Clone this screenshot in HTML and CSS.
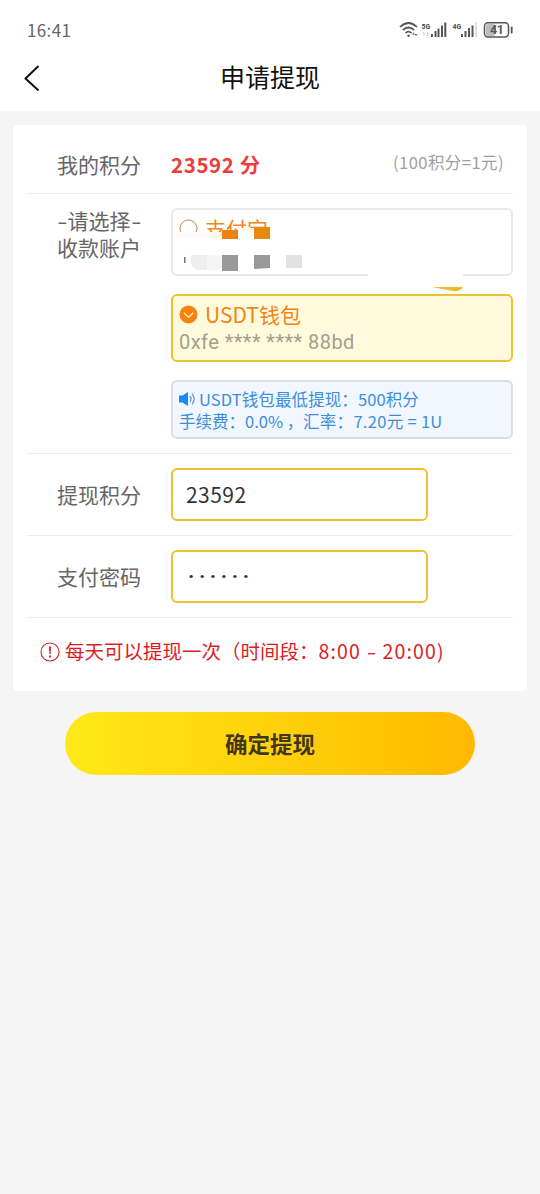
FILE: index.html
```
<!DOCTYPE html>
<html lang="zh-CN">
<head>
    <meta charset="UTF-8">
    <meta name="viewport" content="width=device-width, initial-scale=1.0">
    <title>申请提现</title>
    <link rel="stylesheet" href="styles.css">
</head>
<body>
    <header>
        <!-- 状态栏 -->
        <div class="status">
            <span class="clock">16:41</span>
            <svg class="status-icons" width="116" height="20" viewBox="0 0 116 20">
                <g fill="none" stroke="#555" stroke-width="1.7">
                    <path d="M1 7Q9.500 -1 18 7"/>
                    <path d="M3.800 10.200Q9.500 4.800 15.200 10.200"/>
                    <path d="M6.500 13.100Q9.500 10.300 12.500 13.100"/>
                </g>
                <circle cx="9.500" cy="15.700" r="1.200" fill="#555"/>
                <path d="M13 14.500l1.500-2 1.500 2zM15.500 14l1.500 2 1.500-2z" fill="#666"/>
                <text x="22.500" y="8.500" class="net">5G</text>
                <path d="M25 12v4M23.500 13.500l1.500-1.500M28.500 12v4M28.500 16l1.500-1.500" stroke="#ccc" fill="none"/>
                <g fill="#555">
                    <rect x="32" y="14" width="2" height="3"/>
                    <rect x="35.500" y="11" width="2" height="6"/>
                    <rect x="38.500" y="8.500" width="2" height="8.500"/>
                    <rect x="42" y="5.500" width="2" height="11.500"/>
                    <rect x="45.300" y="2.500" width="2" height="14.500"/>
                    <rect x="62" y="14" width="2" height="3"/>
                    <rect x="65.500" y="11" width="2" height="6"/>
                    <rect x="69" y="8" width="2" height="9"/>
                    <rect x="72.500" y="5.500" width="2" height="11.500"/>
                </g>
                <rect x="76" y="2.500" width="2" height="14.500" fill="#ddd"/>
                <text x="53.500" y="8.500" class="net">4G</text>
                <rect x="87" y="4" width="9" height="12" rx="2" fill="#bbb"/>
                <rect x="85.500" y="2.700" width="24" height="14.300" rx="3.500" fill="none" stroke="#555" stroke-width="1.500"/>
                <rect x="111.800" y="6.500" width="1.800" height="7" rx=".9" fill="#555"/>
                <text x="91" y="14.400" class="level">41</text>
            </svg>
        </div>
        <!-- 标题栏 -->
        <div class="nav">
            <svg width="20" height="30" viewBox="0 0 20 30">
                <path d="M16.500 4L3.500 16.500L16.500 28.500" fill="none" stroke="#111" stroke-width="2"/>
            </svg>
            <h1>申请提现</h1>
        </div>
    </header>

    <main class="card">
        <div class="row row-points">
            <div class="label">我的积分</div>
            <div class="points">23592 分</div>
            <div class="rate">(100积分=1元)</div>
        </div>

        <div class="row row-account">
            <div class="label label-account"><span class="dash">-</span>请选择<span class="dash">-</span><br>收款账户</div>
            <div class="accounts">
                <div class="account">
                    <div class="name">
                        <svg width="19" height="19" viewBox="0 0 19 19"><circle cx="9.500" cy="9.500" r="8.500" fill="none" stroke="#c8833c"/></svg>
                        支付宝
                    </div>
                    <svg class="mask" width="342" height="86" viewBox="0 0 342 86">
                        <path d="M4 24h110v35H4z" fill="#fff"/>
                        <path d="M4 24h36v6H4z" fill="#fffafa"/>
                        <path d="M40 24h11v7H40zM67 20h16v8H67z" fill="#fff7e2"/>
                        <path d="M51 22h16v9H51z" fill="#ed8410"/>
                        <path d="M83 19h16v12H83z" fill="#e68a0c"/>
                        <path d="M67 23h16v8H67z" fill="#f5ffff"/>
                        <path d="M13 49h1.500v6H13z" fill="#777"/>
                        <path d="M20 47h16v15h-8q-5 0-8-6z" fill="#eee"/>
                        <path d="M36 47h15v15H36z" fill="#f5f5f5"/>
                        <path d="M51 47h16v16H51zM83 47h16v13l-16 1z" fill="#999"/>
                        <path d="M115 47h16v13h-16z" fill="#e2e2e2"/>
                        <path d="M197 65h95v4h-95z" fill="#fff"/>
                        <path d="M261 79h31q-3 5-10 4z" fill="#edb92e"/>
                    </svg>
                </div>
                <div class="account active">
                    <div class="name">
                        <svg width="19" height="19" viewBox="0 0 19 19">
                            <circle cx="9.500" cy="9.500" r="9" fill="#f9820f"/>
                            <path d="M4.800 7.800l4.700 4.500 4.700-4.500" fill="none" stroke="#ffe9b8" stroke-width="1.300"/>
                        </svg>
                        USDT钱包
                    </div>
                    <div class="address">0xfe **** **** 88bd</div>
                </div>
                <div class="tip">
                    <div class="tip-line">
                        <svg width="17" height="16" viewBox="0 0 17 16">
                            <path d="M0 4.500h3.500L9 1v14l-5.500-3.500H0z" fill="#1e88f5"/>
                            <path d="M11 5.200q2.300 2.800 0 5.600M13 2.800q4.500 5.200 0 10.400" fill="none" stroke="#3a8fe8" stroke-width="1.100"/>
                        </svg>
                        <span class="tip-min">USDT钱包最低提现：500积分</span>
                    </div>
                    <div class="tip-line"><span class="tip-fee">手续费：0.0% ，</span><span class="tip-rate">汇率：7.20元 = 1U</span></div>
                </div>
            </div>
        </div>

        <div class="row row-input">
            <label class="label" for="amount">提现积分</label>
            <input type="text" id="amount" value="23592">
        </div>

        <div class="row row-input">
            <div class="label">支付密码</div>
            <div class="field">······</div>
        </div>

        <div class="notice">
            <svg width="20" height="20" viewBox="0 0 20 20">
                <circle cx="10" cy="10" r="9" fill="none" stroke="#cf2828" stroke-width="1.100"/>
                <path d="M9 4.500h2l-.4 7.500H9.400zM9 13.500h2v2H9z" fill="#d81e1e"/>
            </svg>
            <span>每天可以提现一次（时间段：</span><span class="hours">8:00 <span class="dash">-</span> 20:00)</span>
        </div>
    </main>

    <button class="submit">确定提现</button>
</body>
</html>
```
FILE: styles.css
```
* { box-sizing: border-box; }
body { margin: 0; min-height: 1194px; background: #f5f5f5; color: #333; font-family: "Noto Sans CJK SC", sans-serif; }
header { height: 111px; background: #fff; }
.status { height: 45px; padding: 20px 25px 0 27px; display: flex; justify-content: space-between; }
.clock { font-size: 17px; line-height: 19px; letter-spacing: .35px; color: #666; }
.status-icons { display: block; }
.net { font: bold 8px "Liberation Sans Narrow", "Roboto Condensed", Roboto, sans-serif; fill: #555; }
.level { font: bold 12.5px Roboto, sans-serif; fill: #555; letter-spacing: -.3px; }
.nav { height: 66px; padding: 17px 22px 0; display: grid; grid-template-columns: 20px 1fr 20px; }
h1 { margin: 0; font-size: 25px; font-weight: 400; line-height: 29px; text-align: center; color: #111; }

.card { height: 566px; margin: 14px 13px 0; padding: 0 14px; background: #fff; border-radius: 5px; }
.row { display: flex; border-bottom: 1px solid #ebebeb; padding: 14px 0 14px 30px; }
.label { width: 114px; flex: none; font-size: 21px; color: #666; }
.row-points { height: 69px; padding-top: 24px; line-height: 30px; }
.points { flex: 1; font-size: 20.5px; font-weight: bold; color: #ee3b3b; letter-spacing: .6px; }
.rate { margin-right: 9px; font-size: 16.5px; line-height: 27px; color: #a0a0a0; letter-spacing: .45px; white-space: nowrap; }
.row-account { height: 260px; padding-top: 13px; }
.label-account { line-height: 27px; }
.dash { display: inline-block; width: 10.5px; text-align: center; transform: scaleX(1.4); }

.accounts { width: 342px; flex: none; margin-top: 1px; display: flex; flex-direction: column; gap: 18px; }
.account { position: relative; height: 68px; padding: 6px 7px; border: 2px solid #e9e9e9; border-radius: 6px; }
.account.active { background: #fffadc; border-color: #edc132; }
.name { display: flex; align-items: center; gap: 7px; height: 27px; margin: -1px 0 0 -1px; font-size: 21px; line-height: 27px; color: #f18519; }
.address { margin-left: -1px; font-family: Roboto, sans-serif; font-size: 20px; line-height: 29px; color: #a49f8f; letter-spacing: .45px; }
.mask { position: absolute; left: -2px; top: -2px; }
.tip { height: 59px; padding: 6px; border: 2px solid #dadfe5; border-radius: 6px; background: #f2f7ff; font-size: 16.5px; line-height: 22px; color: #3b8fda; }
.tip-line { display: flex; align-items: center; height: 22px; white-space: nowrap; }
.tip-min { margin-left: 3px; letter-spacing: .1px; }
.tip-fee { width: 124px; }
.tip-rate { letter-spacing: .3px; }

.row-input { height: 82px; align-items: center; }
.row-input .label { margin-top: -2px; }
.row-input input, .field { width: 257px; height: 53px; padding: 0 13px 2px; border: 2px solid #edc132; border-radius: 6px; background: #fff; color: #333; font: 21px/49px "Noto Sans CJK SC", sans-serif; outline: none; }
.row-input input { letter-spacing: .45px; }
.field { padding-left: 15px; font-family: Roboto, "Noto Sans", sans-serif; font-weight: bold; letter-spacing: 4.6px; }
.notice { display: flex; align-items: center; height: 67px; padding: 0 0 2px 13px; font-size: 19.5px; color: #dc1c24; white-space: nowrap; }
.notice svg { margin-right: 5px; position: relative; top: 1px; }
.hours { letter-spacing: 1.15px; }
.submit { display: block; width: 410px; height: 63px; margin: 21px auto 0; padding: 0 0 2px; border: 0; border-radius: 32px; background: linear-gradient(90deg, #ffe917, #ffb900); font: bold 22.5px "Noto Sans CJK SC", sans-serif; color: #40371c; }
```
